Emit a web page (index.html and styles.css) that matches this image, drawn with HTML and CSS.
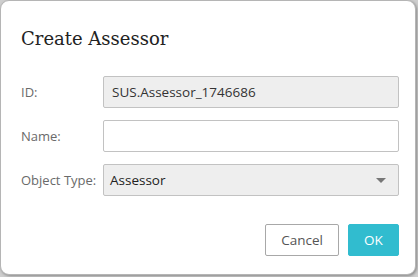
FILE: index.html
```html
<!DOCTYPE html>
<html>
<head>
<meta charset="utf-8">
<link rel="stylesheet" href="styles.css">
</head>
<body>
<div class="dialog">
  <h1 class="title">Create Assessor</h1>
  <div class="form">
    <label class="label">ID:</label>
    <div class="field field-readonly">SUS.Assessor_1746686</div>
    <label class="label">Name:</label>
    <div class="field"></div>
    <label class="label">Object Type:</label>
    <div class="field field-readonly select">
      <span>Assessor</span>
      <span class="caret"></span>
    </div>
  </div>
  <div class="footer">
    <button class="btn btn-cancel">Cancel</button>
    <button class="btn btn-ok">OK</button>
  </div>
</div>
</body>
</html>
```
FILE: styles.css
```css
html, body {
  margin: 0;
  padding: 0;
  background: #cfcfcf;
}
body {
  width: 418px;
  height: 277px;
  overflow: hidden;
}
.dialog {
  box-sizing: border-box;
  width: 416px;
  height: 275px;
  background: #fff;
  border: 1px solid #b5b5b5;
  border-radius: 9px;
  box-shadow: 1px 1px 3px rgba(0,0,0,0.35);
  padding: 24px 16px 0 20px;
  font-family: "Open Sans", "Noto Sans", sans-serif;
}
.title {
  margin: 0;
  font-family: "DejaVu Serif", serif;
  font-weight: normal;
  font-size: 18px;
  line-height: 28px;
  color: #222;
}
.form {
  margin-top: 23px;
  display: grid;
  grid-template-columns: 82px 1fr;
  row-gap: 12px;
  align-items: center;
}
.label {
  font-size: 13px;
  color: #6a6a6a;
}
.field {
  box-sizing: border-box;
  height: 32px;
  border: 1px solid #c2c2c2;
  border-radius: 2px;
  background: #fff;
  padding: 0 8px;
  display: flex;
  align-items: center;
  font-size: 13.5px;
  color: #333;
}
.field-readonly {
  background: #eeeeee;
}
.select {
  justify-content: space-between;
  padding-right: 12px;
  padding-left: 6px;
  color: #222;
}
.caret {
  width: 0;
  height: 0;
  border-left: 5px solid transparent;
  border-right: 5px solid transparent;
  border-top: 5px solid #777;
}
.footer {
  margin-top: 28px;
  display: flex;
  justify-content: flex-end;
  gap: 9px;
}
.btn {
  box-sizing: border-box;
  height: 32px;
  border-radius: 2px;
  font-family: "Open Sans", "Noto Sans", sans-serif;
  font-size: 13.5px;
  padding: 0;
  cursor: pointer;
}
.btn-cancel {
  width: 74px;
  background: #fff;
  border: 1px solid #a8a8a8;
  color: #555;
}
.btn-ok {
  width: 51px;
  background: #31bccf;
  border: 1px solid #31bccf;
  color: #fff;
}
```
